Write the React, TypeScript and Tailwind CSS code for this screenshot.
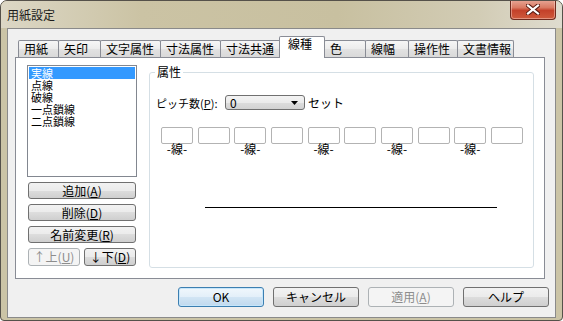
import React from "react";

type BtnProps = {
    children: React.ReactNode;
    disabled?: boolean;
    primary?: boolean;
    className?: string;
};

// win7 style push button
function Btn({ children, disabled, primary, className }: BtnProps) {
    let look = "border-[#707070] bg-[linear-gradient(to_bottom,#f2f2f2_0%,#ebebeb_50%,#dddddd_50%,#cfcfcf_100%)] text-black";
    if (disabled) {
        look = "border-[#adb2b5] bg-[#f4f4f4] text-[#8d8d8d]";
    } else if (primary) {
        look = "border-[#3c7fb1] bg-[linear-gradient(to_bottom,#f0f7fc_0%,#e3eff9_50%,#d2e5f4_50%,#c0d9ee_100%)] text-black shadow-[inset_0_0_0_1px_#c6e6fb]";
    }
    return (
        <div className={`flex items-center justify-center border rounded-[3px] leading-[12px] ${look} ${className ?? ""}`}>
            {children}
        </div>
    );
}

const tabs = [
    { label: "用紙", w: "w-[41px]" },
    { label: "矢印", w: "w-[43px]" },
    { label: "文字属性", w: "w-[61px]" },
    { label: "寸法属性", w: "w-[61px]" },
    { label: "寸法共通", w: "w-[62px]" },
    { label: "線種", w: "w-[46px]", active: true },
    { label: "色", w: "w-[42px]" },
    { label: "線幅", w: "w-[44px]" },
    { label: "操作性", w: "w-[50px]" },
    { label: "文書情報", w: "w-[57px]" },
];

const lineTypes = ["実線", "点線", "破線", "一点鎖線", "二点鎖線"];

export default function App() {
    const selected = 0;
    const boxes = Array.from({ length: 10 }, (_, i) => i);

    return (
        <div className="w-[563px] h-[321px] flex flex-col overflow-hidden border border-[#55514a] rounded-t-[7px] rounded-b-[4px] bg-[#cbc4a6] text-[12px] leading-[12px] text-black font-['Noto_Sans_CJK_JP','Noto_Sans',sans-serif]">
            {/* title bar */}
            <div className="h-[27px] flex items-start justify-between bg-[linear-gradient(to_right,#dcd7c5_0%,#cbc3a4_25%,#c8c0a0_60%,#d2ccb5_85%,#dfdccf_100%)]">
                <div className="pl-[6px] pt-[7px] leading-[14px] text-[#1b1b1b]">用紙設定</div>
                <div className="-mt-px mr-[6px] w-[46px] h-[20px] flex items-center justify-center rounded-b-[4px] border border-t-0 border-[#6f2a1e] bg-[linear-gradient(to_bottom,#e8a797_0%,#d97a63_40%,#c4412a_55%,#cf5a3c_100%)] shadow-[inset_0_0_0_1px_rgba(255,220,210,0.45)]">
                    <svg width="14" height="11" viewBox="0 0 14 11">
                        <path d="M2 1.5 L12 9.5 M12 1.5 L2 9.5" stroke="#5a1c12" strokeWidth="4.2" strokeLinecap="square" />
                        <path d="M2 1.5 L12 9.5 M12 1.5 L2 9.5" stroke="#ffffff" strokeWidth="2.2" strokeLinecap="square" />
                    </svg>
                </div>
            </div>

            {/* client area */}
            <div className="mx-[6px] h-[290px] flex flex-col border border-[#8a8a8a] bg-[#f0f0f0]">
                {/* tab strip */}
                <div className="h-[28px] flex items-end pl-[10px]">
                    {tabs.map((t, i) => {
                        if (t.active) {
                            return (
                                <div key={t.label} className={`${t.w} relative z-10 -ml-[3px] mb-[-1px] h-[22px] pl-[8px] pt-[1px] border border-b-0 border-[#898c95] rounded-t-[2px] bg-white`}>
                                    {t.label}
                                </div>
                            );
                        }
                        return (
                            <div key={t.label} className={`${t.w} ${i > 0 ? "-ml-px" : ""} h-[17px] flex items-center pl-[5px] border border-b-0 border-[#898c95] rounded-t-[2px] bg-[linear-gradient(to_bottom,#f6f6f6_0%,#ececec_50%,#e2e2e2_51%,#d9d9d9_100%)]`}>
                                {t.label}
                            </div>
                        );
                    })}
                </div>

                {/* tab page */}
                <div className="ml-[7px] w-[530px] h-[222px] flex items-start pl-[11px] pt-[7px] border border-[#898c95] bg-white">
                    {/* left column */}
                    <div className="w-[110px] flex flex-col">
                        <div className="h-[112px] border border-[#828790] p-[1px] bg-white text-[11px]">
                            {lineTypes.map((l, i) => (
                                <div key={l} className={`h-[12px] leading-[12px] pl-[2px] ${i === selected ? "bg-[#3399ff] text-white" : ""}`}>
                                    {l}
                                </div>
                            ))}
                        </div>
                        <div className="mt-[5px] ml-[1px] w-[108px] flex flex-col gap-[5px]">
                            <Btn className="h-[17px]">追加(<span className="underline">A</span>)</Btn>
                            <Btn className="h-[17px]">削除(<span className="underline">D</span>)</Btn>
                            <Btn className="h-[17px]">名前変更(<span className="underline">R</span>)</Btn>
                            <div className="flex justify-between">
                                <Btn disabled className="w-[52px] h-[18px]">↑上(<span className="underline">U</span>)</Btn>
                                <Btn className="w-[52px] h-[18px]">↓下(<span className="underline">D</span>)</Btn>
                            </div>
                        </div>
                    </div>

                    {/* group box */}
                    <fieldset className="ml-[12px] w-[385px] h-[203px] border border-[#d5dfe5] rounded-[3px]">
                        <legend className="ml-[5px] px-[2px] leading-[14px]">属性</legend>
                        <div className="mt-[16px] h-[15px] flex items-center pl-[6px]">
                            <div className="w-[69px] text-[11px]">ピッチ数(<span className="underline">P</span>):</div>
                            <div className="w-[80px] h-[15px] flex items-center justify-between pl-[4px] pr-[6px] border border-[#707070] rounded-[3px] bg-[linear-gradient(to_bottom,#f3f3f3_0%,#ebebeb_50%,#dddddd_50%,#d2d2d2_100%)]">
                                <span>0</span>
                                <svg width="7" height="4" viewBox="0 0 7 4">
                                    <path d="M0 0 H7 L3.5 4 Z" fill="#000" />
                                </svg>
                            </div>
                            <div className="ml-[3px]">セット</div>
                        </div>
                        <div className="mt-[17px] pl-[11px] flex gap-[4.67px]">
                            {boxes.map((b) => (
                                <div key={b} className="w-[32px] flex flex-col items-center">
                                    <div className="w-[32px] h-[17px] border border-[#b3b3b3] rounded-[2px] bg-white" />
                                    <div className="mt-[-1px] h-[12px]">{b % 2 === 0 ? "-線-" : ""}</div>
                                </div>
                            ))}
                        </div>
                        <div className="mt-[52px] ml-[55px] w-[292px] h-px bg-black" />
                    </fieldset>
                </div>

                {/* dialog buttons */}
                <div className="mt-[8px] pr-[6px] flex justify-end gap-[9px]">
                    <Btn primary className="w-[86px] h-[20px]">OK</Btn>
                    <Btn className="w-[86px] h-[20px]">キャンセル</Btn>
                    <Btn disabled className="w-[86px] h-[20px]">適用(<span className="underline">A</span>)</Btn>
                    <Btn className="w-[86px] h-[20px]">ヘルプ</Btn>
                </div>
            </div>
        </div>
    );
}
